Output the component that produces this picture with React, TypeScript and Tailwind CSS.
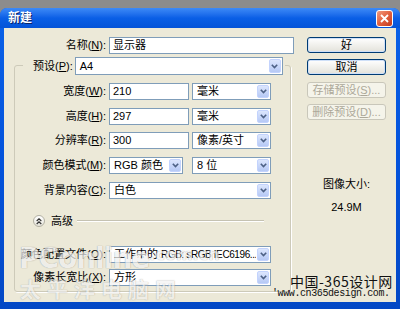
import React from "react";

const FONT = { fontFamily: '"Liberation Sans", "Noto Sans CJK SC", sans-serif' };

function Arrow() {
  return (
    <div className="w-[14px] h-full p-[1px] shrink-0">
      <div className="w-full h-full rounded-[2px] bg-gradient-to-b from-[#dce6fd] to-[#b6c9f5] border border-[#c3d3fd] flex items-center justify-center">
        <svg width="7" height="5" viewBox="0 0 7 5">
          <path d="M0.8 0.8 L3.5 3.6 L6.2 0.8" fill="none" stroke="#4d6185" strokeWidth="1.6" />
        </svg>
      </div>
    </div>
  );
}

function Select({ w, h = 17, text }: { w: string; h?: number; text: React.ReactNode }) {
  return (
    <div
      className={`${w} bg-white border border-[#7f9db9] flex items-stretch shrink-0`}
      style={{ height: h }}
    >
      <div className="flex-1 pl-[4px] flex items-center whitespace-nowrap overflow-hidden text-[11px] text-black">
        {text}
      </div>
      <Arrow />
    </div>
  );
}

function Input({ w, text }: { w: string; text: string }) {
  return (
    <div className={`${w} h-[17px] bg-white border border-[#7f9db9] pl-[3px] flex items-center text-[11px] text-black shrink-0`}>
      {text}
    </div>
  );
}

function Label({ w, text, k }: { w: string; text: string; k: string }) {
  return (
    <div className={`${w} mr-[3px] text-right text-[11px] text-black whitespace-nowrap shrink-0`}>
      {text}(<span className="underline">{k}</span>):
    </div>
  );
}

function Btn({ text, disabled }: { text: React.ReactNode; disabled?: boolean }) {
  return disabled ? (
    <div className="w-[79px] h-[16px] rounded-[3px] border border-[#c9c7ba] bg-[#f5f4ea] flex items-center justify-center text-[11px] text-[#aca899]">
      {text}
    </div>
  ) : (
    <div className="w-[79px] h-[16px] rounded-[3px] border border-[#003c74] bg-gradient-to-b from-[#ffffff] to-[#e3e2da] shadow-[inset_0_0_0_1px_#cfe0f8] flex items-center justify-center text-[11px] text-black">
      {text}
    </div>
  );
}

export default function App() {
  return (
    <div className="w-[400px] h-[309px] bg-[#8c8c8c] pt-[8px] overflow-hidden relative" style={FONT}>
      <div className="h-[301px] flex flex-col rounded-t-[7px] bg-gradient-to-b from-[#0b62e8] via-[#0453dc] to-[#0348c5]">
        {/* title bar */}
        <div className="h-[20px] flex items-center justify-between pl-[8px] pr-[7px] bg-gradient-to-b from-[#3d8af7] via-[#0a5fe6] to-[#0554d8] rounded-t-[7px]">
          <span className="text-white font-bold text-[12px] [text-shadow:1px_1px_0_#0a246a]">新建</span>
          <div className="w-[17px] h-[17px] rounded-[3px] border border-white bg-gradient-to-br from-[#f09a7e] via-[#e2603f] to-[#c1391c] flex items-center justify-center">
            <svg width="9" height="9" viewBox="0 0 9 9">
              <path d="M1 1 L8 8 M8 1 L1 8" stroke="white" strokeWidth="1.8" />
            </svg>
          </div>
        </div>
        {/* client */}
        <div className="flex-1 mx-[4px] mb-[7px] bg-[#ece9d8] flex">
          {/* left column */}
          <div className="w-[299px] pt-[9px] flex flex-col">
            <div className="flex items-center">
              <Label w="w-[102px]" text="名称" k="N" />
              <Input w="w-[185px]" text="显示器" />
            </div>
            <div className="mt-[11px] ml-[10px] w-[277px] border border-[#cdcab9] rounded-[3px] shadow-[1px_1px_0_#fff] pb-[5px] flex flex-col">
              <div className="-mt-[9px] ml-[8px] w-fit bg-[#ece9d8] flex items-center pl-[10px] pr-[2px]">
                <div className="mr-[2px] text-[11px] whitespace-nowrap">
                  预设(<span className="underline">P</span>):
                </div>
                <Select w="w-[208px]" h={18} text="A4" />
              </div>
              <div className="mt-[8px] flex items-center">
                <Label w="w-[91px]" text="宽度" k="W" />
                <Input w="w-[80px]" text="210" />
                <div className="w-[3px]" />
                <Select w="w-[79px]" text="毫米" />
              </div>
              <div className="mt-[8px] flex items-center">
                <Label w="w-[91px]" text="高度" k="H" />
                <Input w="w-[80px]" text="297" />
                <div className="w-[3px]" />
                <Select w="w-[79px]" text="毫米" />
              </div>
              <div className="mt-[7px] flex items-center">
                <Label w="w-[91px]" text="分辨率" k="R" />
                <Input w="w-[80px]" text="300" />
                <div className="w-[3px]" />
                <Select w="w-[79px]" text="像素/英寸" />
              </div>
              <div className="mt-[8px] flex items-center">
                <Label w="w-[91px]" text="颜色模式" k="M" />
                <Select w="w-[74px]" text="RGB 颜色" />
                <div className="w-[9px]" />
                <Select w="w-[79px]" text="8 位" />
              </div>
              <div className="mt-[8px] flex items-center">
                <Label w="w-[91px]" text="背景内容" k="C" />
                <Select w="w-[162px]" text="白色" />
              </div>
              <div className="mt-[16px] ml-[18px] mr-[26px] flex items-center h-[12px]">
                <div className="w-[12px] h-[12px] rounded-full border border-[#b3b1a4] bg-gradient-to-b from-white to-[#e6e4da] flex items-center justify-center">
                  <svg width="6" height="7" viewBox="0 0 6 7">
                    <path d="M0.7 3 L3 0.8 L5.3 3 M0.7 6 L3 3.8 L5.3 6" fill="none" stroke="#333" strokeWidth="1.2" />
                  </svg>
                </div>
                <span className="ml-[6px] text-[11px]">高级</span>
                <div className="flex-1 ml-[4px] h-[2px] border-t border-[#c5c2b2] border-b border-b-white" />
              </div>
              <div className="mt-[19px] flex items-center">
                <Label w="w-[91px]" text="颜色配置文件" k="O" />
                <Select
                  w="w-[162px]"
                  text={
                    <span>
                      工作中的 <span className="text-[10px] tracking-[-0.4px]">RGB: sRGB IEC6196...</span>
                    </span>
                  }
                />
              </div>
              <div className="mt-[6px] flex items-center">
                <Label w="w-[91px]" text="像素长宽比" k="X" />
                <Select w="w-[162px]" text="方形" />
              </div>
            </div>
          </div>
          {/* right column */}
          <div className="ml-[4px] pt-[9px] flex flex-col items-center w-[79px]">
            <Btn text="好" />
            <div className="h-[6px]" />
            <Btn text="取消" />
            <div className="h-[7px]" />
            <Btn disabled text={<span>存储预设(<span className="underline">S</span>)...</span>} />
            <div className="h-[6px]" />
            <Btn disabled text={<span>删除预设(<span className="underline">D</span>)...</span>} />
            <div className="mt-[56px] text-[11px]">图像大小:</div>
            <div className="mt-[6px] text-[11px]">24.9M</div>
          </div>
        </div>
      </div>
      {/* watermarks */}
      <div className="absolute left-[19px] top-[245px] flex items-end pointer-events-none opacity-70">
        <span className="text-[28px] leading-[28px] font-bold tracking-[-1px] text-white/90 [text-shadow:0_0_1px_#666]" style={{ fontFamily: '"DejaVu Sans", sans-serif' }}>
          PConline
        </span>
        <span className="text-[16px] leading-[18px] mb-[9px] font-bold text-white/90 [text-shadow:0_0_1px_#666]" style={{ fontFamily: '"DejaVu Sans", sans-serif' }}>
          .com.cn
        </span>
      </div>
      <div className="absolute left-[20px] top-[276px] text-[21px] leading-[24px] font-bold tracking-[6px] text-white/90 opacity-60 [text-shadow:0_0_1px_#666] pointer-events-none" style={{ fontFamily: '"Noto Sans CJK SC", sans-serif' }}>
        太平洋电脑网
      </div>
      <div className="absolute left-[290px] top-[273px] text-[14px] leading-[16px] text-[#111] tracking-[0.5px]" style={{ fontFamily: '"Noto Sans CJK SC", sans-serif' }}>
        中国-365设计网
      </div>
      <div className="absolute left-[272px] top-[288px] text-[10px] leading-[12px] text-[#111] tracking-[-0.4px]" style={{ fontFamily: '"Liberation Mono", monospace' }}>
        'www.cn365design.com.
      </div>
    </div>
  );
}
